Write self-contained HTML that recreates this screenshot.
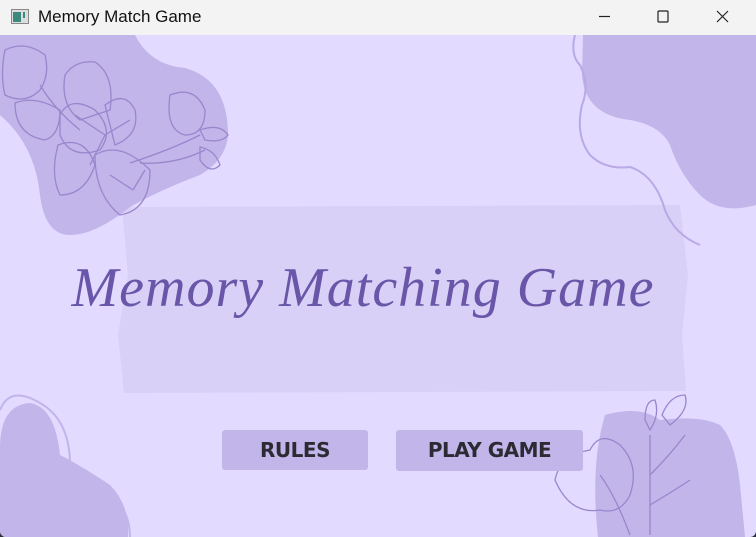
<!DOCTYPE html>
<html><head><meta charset="utf-8"><style>
html,body{margin:0;padding:0;width:756px;height:537px;overflow:hidden;background:#2b2d3a;font-family:"Liberation Sans",sans-serif}
.win{position:absolute;left:0;top:0;width:756px;height:537px;background:#e2daff;border-radius:0 0 6px 6px;overflow:hidden}
.tb{position:absolute;left:0;top:0;width:756px;height:35px;background:#f3f3f3}
.tb .t{position:absolute;left:38px;top:7px;font-size:17px;color:#111}
.btn{position:absolute;background:#c2b5ea;border-radius:3px;font-weight:bold;font-size:20px;color:#2c2a33;text-align:center;font-family:"DejaVu Sans",sans-serif;letter-spacing:-0.5px}
</style></head><body>
<div class="win">
<div class="tb">
 <svg style="position:absolute;left:11px;top:9px" width="18" height="16"><rect x="0.5" y="0.5" width="17" height="14" fill="#ddd" stroke="#888"/><rect x="2" y="3" width="8" height="10" fill="#3a8a80"/><rect x="12" y="3" width="2" height="6" fill="#3a8a80"/></svg>
 <div class="t">Memory Match Game</div>
 <svg style="position:absolute;left:590px;top:8px" width="150" height="18" fill="none" stroke="#222" stroke-width="1.2">
  <line x1="9" y1="8.5" x2="20" y2="8.5"/>
  <rect x="68" y="3" width="10" height="11" rx="1"/>
  <path d="M127 3 L138 14 M138 3 L127 14"/>
 </svg>
</div>
<svg style="position:absolute;left:0;top:35px" width="756" height="502">
 <path d="M122 172 L680 170 L688 240 L682 300 L686 356 L124 358 L118 300 L128 240 Z" fill="#d8d0f6"/>
 <path d="M0 0 L135 0 Q150 30 185 33 Q228 45 228 100 Q226 125 200 140 Q160 155 130 172 Q95 200 70 200 Q45 200 40 160 Q35 110 0 80 Z" fill="#c2b5ea"/>
 <g fill="none" stroke="#9a86cc" stroke-width="1.3">
  <path d="M5 15 Q25 5 45 20 Q50 40 40 55 Q25 70 5 60 Q0 40 5 15Z"/>
  <path d="M65 40 Q75 25 95 27 Q115 40 110 75 Q95 80 80 85 Q60 70 65 40Z"/>
  <path d="M60 80 Q70 60 95 75 Q115 95 100 115 Q70 125 60 100Z"/>
  <path d="M105 70 Q125 55 135 75 Q140 100 115 110Z"/>
  <path d="M15 68 Q35 60 60 75 Q60 100 45 105 Q15 100 15 68Z"/>
  <path d="M58 110 Q85 100 95 130 Q85 160 60 160 Q50 140 58 110Z"/>
  <path d="M95 120 Q120 105 150 135 Q150 175 120 180 Q95 160 95 120Z"/>
  <path d="M170 60 Q195 50 205 75 Q205 100 185 100 Q165 95 170 60Z"/>
  <path d="M200 95 Q220 88 228 100 Q222 108 205 105Z"/>
  <path d="M200 112 Q215 115 220 130 Q210 140 200 125Z"/>
  <path d="M40 50 Q55 75 80 95 M130 128 Q170 115 200 100 M140 128 Q175 130 205 115"/>
  <path d="M105 100 L75 80 M105 100 L130 85 M105 100 L90 130 M133 155 L110 140 M133 155 L145 135"/>
 </g>
 <path d="M583 0 L756 0 L756 170 Q720 180 700 160 Q680 140 670 110 Q660 90 630 85 Q585 80 582 40 Z" fill="#c2b5ea"/>
 <path d="M575 0 Q570 20 580 30 Q590 50 582 70 Q575 100 590 120 Q605 135 630 132 Q655 140 665 175 Q675 200 700 210" fill="none" stroke="#b9a9e6" stroke-width="2"/>
 <path d="M0 413 Q0 370 30 368 Q55 372 60 420 Q80 430 110 450 Q130 470 128 502 L0 502 Z" fill="#c2b5ea"/>
 <path d="M0 375 Q10 350 40 368 Q70 385 70 430 Q75 450 100 450 Q130 470 130 502" fill="none" stroke="#c2b5ea" stroke-width="2"/>
 <path d="M605 380 Q640 370 660 385 Q700 380 720 390 Q735 405 740 450 L745 502 L598 502 Q590 430 605 380Z" fill="#c2b5ea"/>
 <g fill="none" stroke="#9a86cc" stroke-width="1.3">
  <path d="M555 445 Q560 420 590 415 Q600 395 620 410 Q640 430 630 460 Q620 480 600 475 Q570 480 555 445Z"/>
  <path d="M650 500 L650 400 M650 440 Q670 420 685 400 M650 470 Q675 455 690 445 M662 380 Q670 360 685 360 Q690 375 670 390Z M645 385 Q645 365 655 365 Q660 380 650 395Z"/>
  <path d="M600 440 Q615 460 630 500"/>
 </g>
</svg>
<div style="position:absolute;left:40px;top:256px;width:646px;text-align:center;white-space:nowrap;font-family:'Liberation Serif',serif;font-style:italic;font-size:56px;color:#6a56a9;letter-spacing:1px">Memory Matching Game</div>
<div class="btn" style="left:222px;top:430px;width:146px;height:40px;line-height:40px">RULES</div>
<div class="btn" style="left:396px;top:430px;width:187px;height:41px;line-height:40px">PLAY GAME</div>
</div>
</body></html>
